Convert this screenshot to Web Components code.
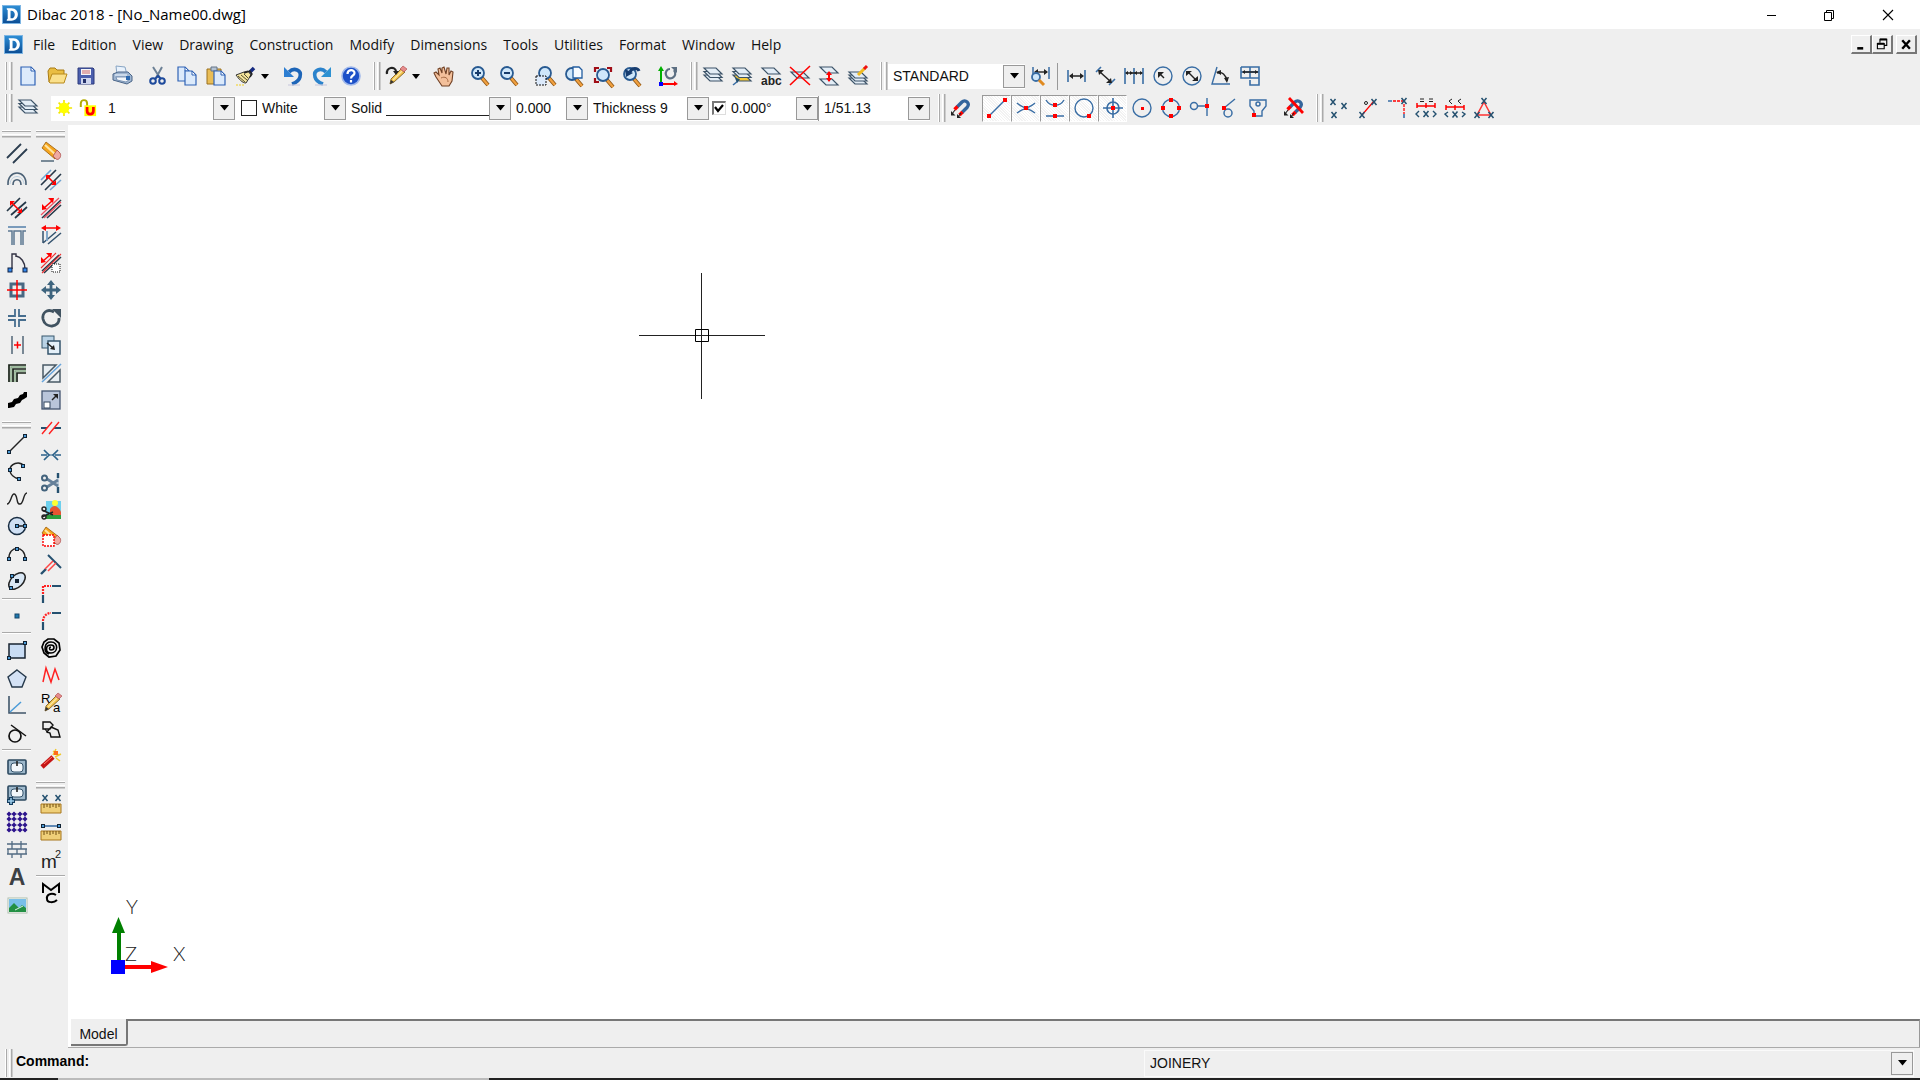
<!DOCTYPE html>
<html lang="en">
<head>
<meta charset="utf-8">
<title>Dibac 2018 - [No_Name00.dwg]</title>
<style>
    html, body { height: 100%; margin: 0; }
    body { background: #efefef; overflow: hidden; }
</style>
</head>
<body>
<dibac-app></dibac-app>

<script>
// --- Icons (20 x 20 grid) ---

const S = '#3a6ea5';   // steel blue
const N = '#24506f';   // dark blue
const K = '#222';

const line = (d, color = K, width = 1.4, extra = '') =>
    `<path d="${d}" fill="none" stroke="${color}" stroke-width="${width}" ${extra}/>`;
const fill = (d, color, stroke = 'none', width = 1) =>
    `<path d="${d}" fill="${color}" stroke="${stroke}" stroke-width="${width}"/>`;
const dot = (x, y, color = '#f00') => `<rect x="${x - 2}" y="${y - 2}" width="4" height="4" fill="${color}"/>`;
const node = (x, y) => `<rect x="${x - 1.5}" y="${y - 1.5}" width="3" height="3" fill="#4a9bd8" stroke="#123" stroke-width="1"/>`;
const ex = (x, y, color = N) => line(`M${x - 2.5} ${y - 3}l5 6m0-6l-5 6`, color, 1.5);
const circle = (x, y, r, color = S, width = 1.5, inner = 'none') =>
    `<circle cx="${x}" cy="${y}" r="${r}" fill="${inner}" stroke="${color}" stroke-width="${width}"/>`;

const sheet = (y, color = '#e3edf6') => fill(`M1 ${y}h12l6 6H7z`, color, '#3c5368', 1.2);
const stack = sheet(9) + sheet(5.5) + sheet(2);
const lens = (x = 8, y = 7) =>
    line(`M${x + 4} ${y + 5}l6 7`, '#8a5212', 4) + line(`M${x + 4} ${y + 5}l6 7`, '#f0a040', 2.4) + circle(x, y, 6, '#285a91', 1.8, '#cfe7fa');
const pageAt = (x, y) =>
    fill(`M${x} ${y}h7l4 4v10h-11z`, '#dceafb', '#2f62b5', 1.2) + fill(`M${x + 7} ${y}v4h4z`, '#fff', '#2f62b5', 1);
const magnet = line('M6 9l5-5C14 1 20 5 16 9.500l-5 5', '#34659c', 3.4) +
    line('M3.500 11.500L6.500 8.500M8.500 17l3-3', '#f00', 3.4);
const magnetTips = line('M4 12l-3 4M10 15l-3 4', K, 1.1) + fill('M0 13v4.500h4.500zM6 16v4h4z', K);
const pencil = fill('M4 18l1-5L15 3l4 3L8 16z', '#f3c34c', '#705018', .8) + line('M7 14L16 5', '#fbe7a5', 1.2) +
    fill('M14 3l3-3 4 3-3 3z', '#e58c8c', '#a44', .6) + fill('M4 18l1-4 3 2z', '#333');
const eraser = fill('M1 5l4-6L18 9l-4 7z', '#f5a51e', '#9a5d0a', .8) + line('M4 2l11 10', '#ffe5a3', 2.2) +
    fill('M12 13l4-6 3 3c2 3-1 8-4 6z', '#efaaa2', '#ad4e4e', .8);
const ruler = fill('M0 10h20v9H0z', '#efcf78', '#a8771d', 1) + line('M3 10v4m3-4v3m3-3v4m3-4v3m3-3v4m3-4v3', '#6e4d10', 1);
const scissorsDark = line('M1 10l11 5M1 17l11-5', K, 1.5) + circle(3, 9, 2, K, 1.4) + circle(3, 17, 2, K, 1.4);

const icons = {
    logo: '<defs><linearGradient id="g" x2="0" y2="1"><stop stop-color="#2f8fd6"/><stop offset="1" stop-color="#0b4d94"/></linearGradient></defs><rect x=".5" y=".5" width="19" height="19" fill="url(#g)" stroke="#7db6e4"/>' +
        '<path d="M5 3.500h5c9 0 9 13 0 13H5v-1l1-1v-9l-1-1zM9 6v8c6 1 6-9 0-8z" fill="#fff" fill-rule="evenodd"/>',
    new: fill('M3 1h10l4 4v14H3z', '#dceafb', '#2f62b5', 1.2) + fill('M13 1v4h4z', '#fff', '#2f62b5', 1),
    open: fill('M1 5l2-3h5l2 2h7v12H2z', '#e9bd42', '#a87a14') + fill('M2 16l3-8h15l-3 9H3z', '#fae08b', '#b98a1c'),
    save: fill('M2 2h15l1 1v15H2z', '#4b5fae', '#2c3a7c') + fill('M5 3h10v6H5z', '#f4f4f8') + line('M6 5h8M6 7h8', '#c66', 1) + fill('M5 12h10v6H5z', '#cfd6ee') + fill('M7 13h3v4H7z', '#24306a'),
    print: fill('M4 0l9 1 2 8H5z', '#e9f2fc', '#88a5c4') + fill('M1 8l5-2h10l4 4v5l-5 3-14-4z', '#9fb5d0', '#4a6588') + fill('M4 11h10l4 2-4 3-9-2z', '#f2f6fb', '#6784a8', .8) + line('M3 9h12', '#dfe9f5', 1.4) + dot(16, 12, '#2d69b0'),
    cut: line('M5 1l7 11M14 1L8 12', '#6d8196', 2) + circle(5, 15, 2.8, '#1e4a9c', 2) + circle(14, 15, 2.8, '#1e4a9c', 2) + line('M7 13l3-3 3 3', '#1e4a9c', 2),
    copy: pageAt(1, 1) + pageAt(8, 5),
    paste: fill('M1 3h14v15H1z', '#e9bd56', '#9a711f') + fill('M5 1h6v4H5z', '#b5c3d3', '#647488') + pageAt(8, 5),
    brush: line('M14 7l5-5', '#162b80', 3.6) + fill('M1 9l8-3 4-1 3 4-5 8c-4 0-7-4-10-8z', '#f4e49b', '#333') + line('M3 10l7 6M6 9l6 5M9 8l4 4', '#554f31', 1) + line('M9 7l6-2 2 3-2 3', '#222', 1.4) + line('M1 19h9', '#f3cf1d', 1.2, 'stroke-dasharray="2 1"'),
    undo: line('M6 6c5-5 13-2 11 5-1 4-5 6-8 7', '#1d65b8', 3.6) + fill('M1 1v10h10z', '#2d7ed2') + line('M5 19h12', '#ccd', 1.2),
    redo: line('M14 6C9 1 1 4 3 11c1 4 5 6 8 7', '#2b83cc', 3.6) + fill('M19 1v10H9z', '#2d91d2') + line('M3 19h12', '#ccd', 1.2),
    help: circle(10, 10, 9, '#9eb7ea', 1.6, '#1c50c8') + line('M6.500 8c0-5 7-5 7-1 0 3-3.500 2-3.500 5.500M10 14v2.500', '#fff', 2.2),
    annotate: pencil + line('M1 8c-1-7 8-8 9-3', K, 2.2) + fill('M7 5h6l-3 4z', K),
    hand: fill('M2 11l-2-4 2-1 3 3-1-6 2-1 2 5V2l2-1 2 7 1-6 2 0 0 7 2-4 2 1-1 9-3 5H8z', '#f3c09b', '#704024', 1.1) + line('M7 12c4-2 7 0 7 4', '#a56a44', 1),
    'zoom-in': lens() + line('M8 4v6M5 7h6', '#183c6b', 2),
    'zoom-out': lens() + line('M5 7h6', '#183c6b', 2),
    'zoom-window': lens(10, 7) + '<rect x="1" y="10" width="10" height="9" fill="#dceafb" stroke="#111" stroke-dasharray="2 1"/>',
    'zoom-page': lens(8, 8) + fill('M9 1h6l3 3v8H9z', '#f7fbff', '#235da0', 1.3),
    'zoom-extents': lens(10, 9) + line('M2 6V2h4M14 2h4v4M2 12v4h4', '#a00d16', 2.2),
    'zoom-previous': lens(8, 8) + line('M8 6c2-5 8-4 9-1', '#173d70', 3) + fill('M3 3l1 8 7-4z', '#173d70'),
    axes: line('M3 3v15', '#00b000', 2) + fill('M0 5l3-5 3 5z', '#00b000') + line('M3 18h14', '#f00', 2) + fill('M16 15l4 3-4 2z', '#f00') + dot(3, 18, '#00f') + line('M16 4c5 7-6 12-8 5-1-3 1-6 4-6', '#5c6f82', 2.2) + fill('M13 1h6v6z', '#5c6f82'),
    layers: stack,
    'layer-current': sheet(9, '#f6c936') + sheet(5.5) + sheet(2) + line('M1 19l5-4', S, 1.6) + fill('M3 12l5 1-3 4z', N),
    'layer-name': sheet(2) + '<text x="0" y="19" font-family="Liberation Sans, sans-serif" font-size="12" font-weight="700" fill="#222">abc</text>',
    'layer-off': sheet(6) + line('M0 1l20 18M20 0L0 19', '#f00', 1.6),
    'layer-merge': sheet(1) + sheet(13) + line('M10 6v9', '#f00', 2) + fill('M7 9l3-4 3 4zM7 12l3 4 3-4z', '#f00'),
    'layer-edit': sheet(12) + sheet(9) + sheet(6) + line('M10 9l7-7', '#f1bb20', 3) + line('M16 3l3-3', '#e11', 3),
    'dim-style': line('M3 1v11M19 1v12', S, 1.5) + line('M5 6h12', K, 1.4) + fill('M4 6l4-3v6zM18 6l-4-3v6z', K) + circle(6, 11, 4, S, 1.8, '#cfe7fa') + line('M9 14l5 5', '#e08a20', 3),
    'dim-linear': line('M2 4v12M19 4v12', S, 1.6) + line('M4 10h12', K, 1.5) + fill('M3 10l4-3v6zM18 10l-4-3v6z', K),
    'dim-aligned': line('M1 6l5-5M14 19l6-6', S, 1.6) + line('M5 6l10 9', K, 1.5) + fill('M3 4h6l-5 5zM17 17h-6l5-5z', K),
    'dim-chain': line('M1 2v16M10 2v16M19 2v16', S, 1.6) + line('M2 7h16', K, 1.5) + fill('M1 7l3-2v4zM9 7L6 5v4zM10 7l3-2v4zM19 7l-3-2v4z', K),
    'dim-radius': circle(10, 10, 9, S, 1.4) + line('M11 12L7 8', K, 1.5) + fill('M5 6h6l-6 6z', K),
    'dim-diameter': circle(10, 10, 9, S, 1.4) + line('M6 6l8 8', K, 1.5) + fill('M4 5h6l-6 5zM16 15h-6l6-5z', K),
    'dim-angle': line('M6 1L1 18h18', S, 1.4) + line('M6 7c5-2 9 2 10 8', K, 1.5) + fill('M5 6l5-2v5zM13 12l5-1-2 6z', K),
    'dim-area': line('M1 1h18v18h-9v-5M1 1v11h9V1M1 6h18M10 12h9', S, 1.6) + line('M3 6h15', K, 1.5) + fill('M2 6l3-2v4zM18 6l-3-2v4z', K),

    magnet: magnet + magnetTips,
    'magnet-off': magnet + line('M5 0l14 15', '#f00', 2.8) + magnetTips,
    'snap-end': line('M2 18L18 2', S) + dot(2, 18) + dot(18, 2),
    'snap-cross': line('M1 5c5 5 12 5 18 10M1 15c6-5 13-5 18-10', S) + dot(10, 10),
    'snap-near': line('M1 2c4 7 14 7 18 0M1 18h18', S) + dot(10, 7) + dot(10, 18),
    'snap-circle': circle(10, 10, 9, S, 1.4) + dot(15, 18),
    'snap-target': circle(10, 10, 6, S, 1.7) + line('M10 0v20M0 10h20', S, 1.6) + dot(10, 10),
    'snap-center': circle(10, 10, 9, S, 1.4) + '<rect x="9" y="9" width="3" height="3" fill="red"/>',
    'snap-quad': circle(10, 10, 8.5, S, 1.4) + dot(10, 2) + dot(2, 10) + dot(18, 10) + dot(10, 18),
    'snap-perp': circle(4, 8, 3.5, S) + line('M8 8h9M17 0v18', S) + dot(17, 8),
    'snap-tangent': circle(9, 15, 4, S) + line('M5 10L16 1', S) + dot(5, 10),
    'snap-insert': line('M2 2h16v6l-4 5v5H6v-5L2 8z', S) + circle(10, 6, 2, S) + dot(6, 17),

    'x-points': ex(4, 4) + ex(15, 8) + ex(5, 17),
    'x-line': line('M4 17L16 3', '#f00', 1.2) + circle(8, 5, 1.5, K, 1) + ex(16, 4) + ex(4, 17),
    'x-corner': line('M1 3h4M17 16v4', S, 1.6) + line('M6 3h10M17 6v10', '#f00', 1.3, 'stroke-dasharray="3 1"') + ex(17, 3),
    'x-equal': line('M4 1h4M13 1h4M4 3.500h4M13 3.500h4', K, 1) + line('M1 8h18M1 5v5M10 5v5M19 5v5', '#f00', 1.5) + line('M3 13L0 16l3 3M17 13l3 3-3 3', N) + ex(10, 16),
    'x-less': line('M7 1L4 3l3 3M16 1l-3 2 3 3', K, 1) + line('M1 9h18M1 7v5M10 7v5M19 7v5', '#f00', 1.5) + line('M3 14l-3 2 3 3M17 14l3 2-3 3', N) + ex(10, 16.5),
    'x-triangle': line('M10 4L3 17h14z', '#f33', 1.5) + ex(10, 3) + ex(3, 17) + ex(17, 17),

    wall: line('M0 15L14 1M6 20L20 6', '#2c3e50', 1.8),
    arc2: line('M1 15C0-1 20-1 19 15M6 15c0-7 8-7 8 0', '#4a6075', 1.6) + line('M3 14c1-10 13-10 14 0', '#bcd0e0', 1),
    offset: line('M0 13L13 0M4 17L19 4M8 20L20 9', '#263848', 1.7) + line('M5 5l8 8', '#f00', 1.6) + fill('M3 3h5l-5 5zM15 15h-5l5-5z', '#f00'),
    column: line('M1 2h18', '#7a9bbb', 2) + line('M1 6h4v14M7 20V6h7v14M16 20V6h3', '#5d7892', 1.5),
    door: line('M5 16V1h4v3M9 3c5 1 9 6 9 13', '#334', 1.4) + '<rect x="1" y="15" width="4" height="4" fill="#38e" stroke="#124"/><rect x="16" y="15" width="4" height="4" fill="#38e" stroke="#124"/>',
    window: '<rect x="4" y="4" width="12" height="12" fill="none" stroke="#496983" stroke-width="3"/>' + line('M10 0v20M0 10h20', '#f00', 1.5),
    crossing: line('M1 8h7V1M12 1v7h7M1 12h7v7M12 19v-7h7', '#466d8e', 1.8),
    break: line('M5 1v18M16 1v18', '#516577', 1.5) + line('M7 10h7M10.500 6.500v7', '#f00', 1.5),
    corner: line('M2 19V2h17M6 19V6h13M10 19V10h9', '#172117', 1.7) + line('M4 19V4h15M8 19V8h11', '#84a984', 1.4),
    stairs: fill('M1 13l4-1 2-3 4-1 2-3 3-1 1-2h3v5l-3 2-2 1-2 3-4 1-2 3-5 1H1z', '#000'),
    line: line('M2 18L18 2', K, 1.5) + node(2, 18) + node(18, 2),
    'arc-open': line('M17 5C12-1 3 3 3 9c0 5 5 8 9 9', K, 1.5) + node(16, 5) + node(3, 9) + node(12, 18),
    spline: line('M0 15c4 0 4-10 7-10 4 0 2 11 6 10 4 0 3-11 7-11', K, 1.4),
    circle: circle(10, 10, 8.5, '#172b40', 1.5, '#cfe0f4') + line('M10 10h8', K, 1.5) + node(10, 10) + node(18, 10),
    arc: line('M2 15C1 1 19 1 18 15', K, 1.5) + node(2, 15) + node(18, 15) + node(10, 5),
    ellipse: '<ellipse cx="10" cy="10" rx="10" ry="6" transform="rotate(-45 10 10)" fill="#d9e7f5" stroke="#222" stroke-width="1.500"/>' + dot(10, 10, '#123') + node(4, 17) + node(5, 5),
    point: '<rect x="8" y="8" width="4" height="4" fill="#1e78ae" stroke="#17476b"/>',
    rect: '<rect x="2" y="4" width="16" height="14" fill="#c8dcf4" stroke="#172330" stroke-width="1.500"/>' + node(2, 18) + node(18, 3),
    polygon: fill('M10 2l9 7-4 10H5L1 9z', '#d4e2f5', '#26394b', 1.4),
    angle: line('M2 1v17h17', '#40566a', 1.6) + line('M3 17L14 7', '#4a9bd8', 1.5),
    tangent: circle(8, 13, 6, '#111', 1.7) + line('M4 2l15 11', '#111', 1.5),
    sink: '<rect x="1" y="3" width="18" height="14" rx="1" fill="#9eb8cb" stroke="#2b485f" stroke-width="1.600"/><rect x="4" y="6" width="12" height="9" rx="3" fill="#f2f7fb" stroke="#36546c"/>' + line('M10 4v5', K, 1.6),
    'sink-add': '<rect x="1" y="1" width="18" height="14" rx="1" fill="#9eb8cb" stroke="#2b485f" stroke-width="1.600"/><rect x="4" y="4" width="12" height="8" rx="3" fill="#f2f7fb" stroke="#36546c"/>' + line('M10 2v5', K, 1.6) + line('M0 16h8M4 12v8', '#153d5e', 4) + line('M1 16h6M4 13v6', '#9fd0ee', 1.5),
    grid: line('M2 0v20M7 0v20M13 0v20M18 0v20M0 2h20M0 7h20M0 13h20M0 18h20', '#7a6bb8', .8) + [2, 7, 13, 18].map(x => [2, 7, 13, 18].map(y => fill(`M${x} ${y - 2.5}l2.500 2.500-2.500 2.500-2.500-2.500z`, '#2d148c')).join('')).join(''),
    bricks: line('M0 4h20M0 9h20M0 14h20M5 4v5M14 4v5M1 9v5M10 9v5M19 9v5M5 14v4M14 14v4M5 1v3M14 1v3', '#526b83', 1.3),
    text: '<text x="10" y="18" text-anchor="middle" font-family="Liberation Sans, sans-serif" font-size="23" font-weight="700" fill="#3c4044">A</text>',
    image: '<rect x="1" y="3" width="19" height="15" fill="#fff" stroke="#aebfae"/><rect x="2" y="4" width="17" height="13" fill="#79bfe9"/>' + fill('M2 13l5-5 5 5 3-3 4 3v4H2z', '#239044') + line('M8 15l8-4', '#d8f2e1', 1),

    erase: eraser + line('M0 18h13', '#52687a', 1.5),
    'mod-move': line('M0 10L10 0M9 20L20 10', '#71a4d0', 1.6) + line('M0 15L15 0M4 20L20 4', '#263848', 1.6) + line('M7 7l6 6', '#f00', 1.6) + fill('M5 5h5l-5 5zM15 15h-5l5-5z', '#f00'),
    'mod-extend': line('M1 20L20 2M6 20L20 7', '#263848', 1.6) + line('M0 17L18 0M3 20L20 4', '#ef4f60', 1.2) + line('M3 10l8-7', '#f00', 1.6) + fill('M1 12V6l5 5zM13 0H7l5 5z', '#f00'),
    'mod-shift': line('M2 6v12M6 6v10M2 18L15 7M7 19L20 8', '#34526e', 1.5) + line('M6 6v10', '#8fb9df', 1.5) + line('M2 3h16', '#f00', 1.5) + fill('M0 3l5-3v6zM20 3l-5-3v6z', '#f00'),
    'mod-copy': line('M1 18L18 2M3 20L20 4', '#263848', 1.5) + line('M0 15L15 0M1 20L20 1', '#e33', 1.1) + '<rect x="11" y="11" width="8" height="8" fill="#fff" stroke="#111" stroke-dasharray="1 1"/>' + line('M2 8l7-6', '#f00', 1.5) + fill('M0 10V4l5 5zM11 0H5l5 5z', '#f00'),
    move: line('M10 3v14M3 10h14', '#3e647e', 2.8) + fill('M6 5l4-5 4 5zM6 15l4 5 4-5zM5 6l-5 4 5 4zM15 6l5 4-5 4z', '#3e647e'),
    rotate: line('M13 4C6 0 1 5 2 11c2 10 17 9 16-1', '#405260', 2.8) + fill('M11 1h9v9z', '#405260'),
    duplicate: '<rect x="1" y="1" width="12" height="12" fill="#b9d2e5" stroke="#36566d"/><rect x="7" y="6" width="12" height="13" fill="#e4f0f9" stroke="#36566d" stroke-width="1.500"/>' + line('M6 8l6 5', K, 1.5) + fill('M14 15l-5-1 4-4z', K),
    mirror: fill('M2 2h13L2 15zM19 7v12H7z', '#e8eef2', '#485966', 1.5) + line('M1 19L20 1', '#68a5dc', 1.6),
    scale: '<rect x="1" y="1" width="18" height="18" fill="#b9c5da" stroke="#42546f" stroke-width="1.300"/><rect x="3" y="12" width="6" height="6" fill="#fff" stroke="#33465d"/>' + line('M11 10l4-4', K, 1.5) + fill('M12 4h5v5z', K),
    'cut-line': line('M0 10h6M13 10h7', N, 2) + line('M1 16L11 4M8 16L18 4', '#f22', 1.4),
    join: line('M0 10h6M14 10h6M3 5l5 5-5 5M17 5l-5 5 5 5', '#2c628a', 1.7) + line('M8 10h4', '#2c628a', 1),
    trim: line('M17 0v5M17 14v6', N, 2.4) + line('M17 5v9', '#8fb0cc', 1) + line('M6 6l11 7M6 14l11-7', '#65809a', 2.8) + circle(3.500, 5, 2.5, '#42627c', 2) + circle(3.500, 15, 2.5, '#42627c', 2),
    'trim-image': '<path d="M5 1h15v17H5z" fill="#6ed0ed"/><circle cx="14" cy="3" r="3" fill="#ff3"/>' + fill('M9 9c4-6 9-2 11 3v6H9z', '#e75532') + fill('M5 15h15v4H5z', '#2d9d3c') + scissorsDark,
    'erase-box': eraser + '<rect x="2" y="7" width="11" height="11" fill="#fff" stroke="red" stroke-dasharray="2 1" stroke-width="1.400"/>',
    extend: line('M7 0l13 13', N, 2) + line('M0 19l5-5', N, 2.4) + line('M4 14l8-8M7 16l8-8', '#f44', 1.5),
    chamfer: line('M11 3h9M2 12v8', N, 2.2) + line('M2 11V3h8', '#f22', 2.2, 'stroke-dasharray="2 1"'),
    fillet: line('M11 3h9M2 12v8', N, 2.2) + line('M2 11c0-4 3-8 8-8', '#f22', 2.2, 'stroke-dasharray="2 1"'),
    rings: fill('M7 1h6l5 4 1 7-4 6-7 1-5-4-2-6 2-5z', 'none', '#000', 1.7) + line('M8 16c-6-2-5-12 2-12 8 0 7 11 0 11-6 0-6-8 0-8 4 0 4 5 0 5-2 0-2-3 0-3', '#000', 1.6),
    zigzag: line('M2 17L5 3l5 14 4-13 4 11', '#f22', 1.5),
    'edit-text': pencil + '<text x="0" y="10" font-family="Liberation Sans, sans-serif" font-size="13" fill="#000">R</text><text x="12" y="19" font-family="Liberation Sans, sans-serif" font-size="13" fill="#000">a</text>',
    'to-polygon': line('M2 2h7l3 3-3 4H2zM10 7l7 3 2 7h-9l-1-4-3-1z', '#111', 1.4) + line('M4 9l3 4', '#111', 1.2),
    torch: line('M1 19L12 9', '#c51515', 4.6) + line('M3 16l8-7', '#ff7c6c', 1) + line('M12 7l3-6M14 9l6-3M12 3l6 4M15 10l4 3', '#f0c82d', 1.5) + dot(15, 5, '#ff6b1a'),
    'measure-points': ruler + ex(4, 4) + ex(17, 4),
    'measure-line': ruler + line('M3 5h15', S, 1.6) + node(2, 5) + node(18, 5),
    'square-metre': '<text x="0" y="19" font-family="Liberation Sans, sans-serif" font-size="19" fill="#222">m</text><text x="14" y="9" font-family="Liberation Sans, sans-serif" font-size="11" fill="#222">2</text>',
    mc: line('M2 10V1l8 6 8-6v9M15 12c-5-3-10 0-9 4 0 4 7 4 10 1', '#000', 2),

    minimize: line('M5 10.500h9', '#000', 1),
    restore: line('M4.500 7.500h7v8h-7zM6.500 7.500v-2h7v8h-2', '#000', 1),
    close: line('M5 5l10 10M15 5L5 15', '#000', 1.1),
    'mdi-min': fill('M5 13h7v3H5z', '#000'),
    'mdi-restore': line('M4 9h8v6H4zM7 8V4h8v7h-3', '#000', 1.3) + line('M4 9h8M7 4h8', '#000', 2.4),
    'mdi-close': line('M5 5l9 10M14 5L5 15', '#000', 2.8),
    sun: line('M10 1v18M1 10h18M4 4l12 12M16 4L4 16', '#f2e600', 1.8) + circle(10, 10, 5, '#ff0', 2, '#ff0'),
    unlock: line('M2 9V5c0-5 7-5 7 0v4', '#b3ab00', 2.2) + fill('M6 7h13v12H6z', '#ff0') + line('M9 9v4c0 5 7 5 7 0V9', '#f00', 3)
};

const svg = (name, size = 20) =>
    `<svg width="${size}" height="${size}" viewBox="0 0 20 20" aria-hidden="true">${icons[name]}</svg>`;

// --- Toolbar contents: '|' separator, '-' gap, 'v' small menu arrow, '*' pressed ---

const toolLists = {
    file: ['new', 'open', 'save', '-', 'print', '-', 'cut', 'copy', 'paste', 'brush', 'v', '-', 'undo', 'redo', 'help'],
    view: ['annotate', 'v', '-', 'hand', '-', 'zoom-in', 'zoom-out', '-', 'zoom-window', 'zoom-page', 'zoom-extents', 'zoom-previous', '-', 'axes'],
    layer: ['layers', 'layer-current', 'layer-name', 'layer-off', 'layer-merge', 'layer-edit'],
    dimension: ['dim-style', '|', 'dim-linear', 'dim-aligned', 'dim-chain', 'dim-radius', 'dim-diameter', 'dim-angle', 'dim-area'],
    snap: ['magnet', '-', 'snap-end*', 'snap-cross*', 'snap-near*', 'snap-circle*', 'snap-target*', 'snap-center', 'snap-quad', 'snap-perp', 'snap-tangent', 'snap-insert', '-', 'magnet-off'],
    points: ['x-points', 'x-line', 'x-corner', 'x-equal', 'x-less', 'x-triangle'],
    wall: ['wall', 'arc2', 'offset', 'column', 'door', 'window', 'crossing', 'break', 'corner', 'stairs'],
    draw: ['line', 'arc-open', 'spline', 'circle', 'arc', 'ellipse', '|', 'point', '|', 'rect', 'polygon', 'angle', 'tangent', '|', 'sink', 'sink-add', 'grid', 'bricks', 'text', 'image'],
    modify: ['erase', 'mod-move', 'mod-extend', 'mod-shift', 'mod-copy', 'move', 'rotate', 'duplicate', 'mirror', 'scale', 'cut-line', 'join', 'trim', 'trim-image', 'erase-box', 'extend', 'chamfer', 'fillet', 'rings', 'zigzag', 'edit-text', 'to-polygon', 'torch'],
    measure: ['measure-points', 'measure-line', 'square-metre', '|', 'mc']
};
const menus = ['File', 'Edition', 'View', 'Drawing', 'Construction', 'Modify', 'Dimensions', 'Tools', 'Utilities', 'Format', 'Window', 'Help'];

const renderTools = (tools) => tools.map(tool => {
    if (tool === '-') return '<i class="gap"></i>';
    if (tool === '|') return '<i class="sep"></i>';
    if (tool === 'v') return '<button class="more" aria-label="More"><svg width="8" height="5"><path d="M0 0h8L4 5z"/></svg></button>';
    const name = tool.replace('*', '');
    return `<tool-button icon="${name}"${tool.endsWith('*') ? ' pressed' : ''}></tool-button>`;
}).join('');

// --- Elements ---

class ToolButton extends HTMLElement {
    connectedCallback() {
        const name = this.getAttribute('icon');
        this.attachShadow({ mode: 'open' }).innerHTML = `
            <style>
                :host { display: block; width: 29px; height: 27px; flex: none; }
                button { display: grid; place-items: center; box-sizing: border-box; width: 100%; height: 100%; margin: 0; padding: 0; border: 0; background: none; }
                svg { display: block; overflow: visible; }
                :host([pressed]) button {
                    border-left: 1px solid #999; border-top: 1px solid #999;
                    border-right: 1px solid #fff; border-bottom: 1px solid #fff;
                    background: repeating-linear-gradient(45deg, #fff 0 1px, #f2f2f2 1px 2px);
                }
            </style>
            <button aria-label="${name}" ${this.hasAttribute('pressed') ? 'aria-pressed="true"' : ''}>${svg(name)}</button>
        `;
    }
}
customElements.define('tool-button', ToolButton);

class ToolBar extends HTMLElement {
    connectedCallback() {
        const tools = toolLists[this.getAttribute('tools')] || [];
        this.attachShadow({ mode: 'open' }).innerHTML = `
            <style>
                :host { display: flex; align-items: center; flex: none; }
                .grip { flex: none; box-sizing: border-box; width: 6px; height: 28px; margin-right: 1px; border: solid #aaa; border-width: 0 1px; box-shadow: -1px 0 #fff, inset 2px 0 #efefef, inset 3px 0 #fff, 1px 0 #ccc; }
                :host([plain]) .grip { display: none; }
                .gap { width: 7px; }
                .sep { width: 1px; height: 27px; margin: 0 3px; background: #999; }
                .more { display: grid; place-items: center; width: 12px; height: 27px; padding: 0; border: 0; background: none; }
                :host([vertical]) { flex-direction: column; width: 29px; }
                :host([vertical]) .grip { width: 29px; height: 6px; margin: 0 0 2px; border-width: 1px 0; box-shadow: 0 -1px #fff, inset 0 2px #efefef, inset 0 3px #fff, 0 1px #ccc; }
                :host([vertical]) .sep { width: 29px; height: 2px; margin: 3px 0 2px; background: linear-gradient(#aaa 50%, #fff 50%); }
                :host([vertical]) tool-button:nth-of-type(even) { margin-bottom: 1px; }
            </style>
            <span class="grip"></span>${renderTools(tools)}<slot></slot>
        `;
    }
}
customElements.define('tool-bar', ToolBar);

class ComboBox extends HTMLElement {
    connectedCallback() {
        const label = this.getAttribute('label');
        this.attachShadow({ mode: 'open' }).innerHTML = `
            <style>
                :host { display: flex; align-items: center; box-sizing: border-box; height: 25px; background: #fff; font: 14px/20px "Liberation Sans", Arial, sans-serif; color: #111; }
                select { flex: 1; min-width: 0; height: 22px; margin: 0; padding: 0 0 0 5px; border: 0; appearance: none; background: none; font: inherit; color: inherit; outline: 0; }
                :host([compact]) select { flex: none; }
                button { display: grid; place-items: center; flex: none; box-sizing: border-box; width: 22px; height: 23px; padding: 0; border: 1px solid #999; background: #efefef; }
            </style>
            <slot name="before"></slot>
            <select aria-label="${label}"><option>${this.getAttribute('value')}</option></select>
            <slot name="after"></slot>
            <button aria-label="Open ${label}"><svg width="9" height="6"><path d="M0 0h9L4.500 5.500z"/></svg></button>
        `;
        const select = this.shadowRoot.querySelector('select');
        this.shadowRoot.querySelector('button').addEventListener('click', () => select.showPicker());
    }
}
customElements.define('combo-box', ComboBox);

class TitleBar extends HTMLElement {
    connectedCallback() {
        this.attachShadow({ mode: 'open' }).innerHTML = `
            <style>
                :host { display: flex; align-items: center; height: 29px; padding: 0 3px 0 2px; background: #fff; font: 15px/20px "Open Sans", sans-serif; color: #000; }
                span { flex: 1; padding: 0 0 2px 6px; }
                button { display: grid; place-items: center; width: 58px; height: 29px; padding: 0; border: 0; background: none; }
            </style>
            ${svg('logo', 19)}<span>Dibac 2018 - [No_Name00.dwg]</span>
            <button aria-label="Minimize">${svg('minimize')}</button>
            <button aria-label="Restore">${svg('restore')}</button>
            <button aria-label="Close">${svg('close')}</button>
        `;
    }
}
customElements.define('title-bar', TitleBar);

class MenuBar extends HTMLElement {
    connectedCallback() {
        this.attachShadow({ mode: 'open' }).innerHTML = `
            <style>
                :host { display: flex; align-items: center; height: 31px; padding: 0 3px 0 4px; font: 14px/20px "Open Sans", sans-serif; color: #111; }
                nav { display: flex; flex: 1; gap: 16px; padding-left: 10px; }
                nav button { padding: 0; border: 0; background: none; font: inherit; color: inherit; }
                .mdi { display: grid; place-items: center; box-sizing: border-box; width: 21px; height: 19px; padding: 0; border: solid; border-width: 1px 2px 2px 1px; border-color: #fff #777 #777 #fff; background: #efefef; }
                .mdi:last-child { margin-left: 3px; }
            </style>
            ${svg('logo', 19)}
            <nav>${menus.map(menu => `<button>${menu}</button>`).join('')}</nav>
            <button class="mdi" aria-label="Minimize drawing">${svg('mdi-min', 17)}</button>
            <button class="mdi" aria-label="Restore drawing">${svg('mdi-restore', 17)}</button>
            <button class="mdi" aria-label="Close drawing">${svg('mdi-close', 17)}</button>
        `;
    }
}
customElements.define('menu-bar', MenuBar);

class DrawingArea extends HTMLElement {
    connectedCallback() {
        this.attachShadow({ mode: 'open' }).innerHTML = `
            <style>
                :host { display: block; position: relative; background: #fff; overflow: hidden; }
                svg { position: absolute; }
                .cursor { left: 570px; top: 147px; }
                .ucs { left: 36px; bottom: 32px; }
                text { font: 300 20px Lato, sans-serif; fill: #222; }
            </style>
            <svg class="cursor" width="128" height="128" fill="none" stroke="#222">
                <path d="M63.500 1v126M1 63.500h126"/>
                <path d="M57.500 57.500h13v12h-13z" stroke="#000"/>
            </svg>
            <svg class="ucs" width="90" height="100" viewBox="0 -10 90 100">
                <path d="M13 70V36H8L14.500 20 21 36h-4v34z" fill="#008000"/>
                <path d="M20 68h27v-4l17 6-17 6v-4H20z" fill="#f00"/>
                <path d="M7 63h14v14H7z" fill="#00f"/>
                <text x="22" y="17">Y</text><text x="21" y="64">Z</text><text x="69" y="64">X</text>
            </svg>
        `;
    }
}
customElements.define('drawing-area', DrawingArea);

class SheetTabs extends HTMLElement {
    connectedCallback() {
        this.attachShadow({ mode: 'open' }).innerHTML = `
            <style>
                :host { display: flex; height: 28px; padding-left: 3px; border-bottom: 1px solid #aaa; background: linear-gradient(90deg, #fff 3px, #efefef 3px); font: 14px/20px "Liberation Sans", Arial, sans-serif; color: #111; }
                button { width: 57px; height: 27px; padding: 5px 0 0; border: solid #777; border-width: 0 2px 2px 0; border-radius: 0 0 3px 0; background: #efefef; font: inherit; color: inherit; }
                .rest { flex: 1; border-top: 2px solid #777; border-right: 1px solid #999; }
            </style>
            <button role="tab" aria-selected="true">Model</button><div class="rest"></div>
        `;
    }
}
customElements.define('sheet-tabs', SheetTabs);

class CommandBar extends HTMLElement {
    connectedCallback() {
        this.attachShadow({ mode: 'open' }).innerHTML = `
            <style>
                :host { display: flex; align-items: center; height: 30px; padding: 0 7px 0 6px; font: 14px/20px "Liberation Sans", Arial, sans-serif; color: #111; border-bottom: 2px solid #222; border-image: linear-gradient(90deg, #222 60px, #bbb 60px 490px, #222 490px) 2; }
                label { padding: 0 6px 4px 3px; font-weight: 700; color: #000; }
                input { flex: 1; min-width: 0; height: 24px; padding: 0; border: 0; background: none; font: inherit; outline: 0; }
                combo-box { width: 40vw; background: none; box-shadow: 0 0 0 1px #fafafa; }
            </style>
            <tool-bar></tool-bar>
            <label for="command">Command:</label><input id="command">
            <combo-box label="Group" value="JOINERY"></combo-box>
        `;
    }
}
customElements.define('command-bar', CommandBar);

class DibacApp extends HTMLElement {
    connectedCallback() {
        this.attachShadow({ mode: 'open' }).innerHTML = `
            <style>
                :host { display: flex; flex-direction: column; height: 100vh; background: #efefef; }
                .row { display: flex; align-items: center; height: 32px; padding-left: 6px; gap: 9px; }
                .props { display: flex; align-items: center; height: 25px; background: #fff; }
                main { display: flex; flex: 1; min-height: 0; padding-top: 1px; }
                aside { display: flex; gap: 5px; width: 66px; padding: 6px 0 0 2px; }
                .column { display: flex; flex-direction: column; gap: 8px; }
                .column:last-child { gap: 11px; }
                .work { display: flex; flex-direction: column; flex: 1; min-width: 0; }
                drawing-area { flex: 1; }
                .name { width: 137px; }
                .layer { width: 184px; }
                .color { width: 111px; }
                .linetype { width: 165px; }
                .weight { width: 77px; }
                .thickness { width: 121px; }
                .angle { width: 92px; }
                .scale { width: 112px; border-left: 1px solid #999; }
                .state { display: flex; gap: 6px; padding: 0 6px 0 4px; }
                .swatch { box-sizing: border-box; width: 16px; height: 16px; margin-left: 6px; border: 1px solid #222; }
                .stroke { flex: 1; height: 1px; margin: 14px 0 0 3px; background: #222; }
                .check { display: grid; margin-left: 3px; }
                .check > * { grid-area: 1 / 1; }
                .check svg { pointer-events: none; }
                input { box-sizing: border-box; width: 14px; height: 14px; margin: 0; appearance: none; border: solid; border-width: 2px 1px 1px 2px; border-color: #777 #ddd #ddd #777; background: #fff; }
                input:not(:checked) + svg { display: none; }
            </style>
            <title-bar></title-bar>
            <menu-bar></menu-bar>
            <div class="row">
                <tool-bar tools="file"></tool-bar>
                <tool-bar tools="view"></tool-bar>
                <tool-bar tools="layer"></tool-bar>
                <tool-bar>
                    <combo-box class="name" label="Dimension style" value="STANDARD"></combo-box>
                    <tool-bar plain tools="dimension"></tool-bar>
                </tool-bar>
            </div>
            <div class="row">
                <tool-bar>
                    <tool-button icon="layers"></tool-button>
                </tool-bar>
                <div class="props">
                    <combo-box class="layer" label="Layer" value="1">
                        <span slot="before" class="state">${svg('sun', 18)}${svg('unlock', 18)}</span>
                    </combo-box>
                    <combo-box class="color" label="Color" value="White"><span slot="before" class="swatch"></span></combo-box>
                    <combo-box class="linetype" compact label="Line type" value="Solid"><span slot="after" class="stroke"></span></combo-box>
                    <combo-box class="weight" label="Line width" value="0.000"></combo-box>
                    <combo-box class="thickness" label="Thickness" value="Thickness 9"></combo-box>
                    <span class="check">
                        <input type="checkbox" checked aria-label="Use angle">
                        <svg width="14" height="14" viewBox="0 0 14 14"><path d="M3 6l3 4 5-6" fill="none" stroke="#000" stroke-width="2.200"/></svg>
                    </span>
                    <combo-box class="angle" label="Angle" value="0.000°"></combo-box>
                    <combo-box class="scale" label="Scale" value="1/51.13"></combo-box>
                </div>
                <tool-bar tools="snap"></tool-bar>
                <tool-bar tools="points"></tool-bar>
            </div>
            <main>
                <aside>
                    <div class="column">
                        <tool-bar vertical tools="wall"></tool-bar>
                        <tool-bar vertical tools="draw"></tool-bar>
                    </div>
                    <div class="column">
                        <tool-bar vertical tools="modify"></tool-bar>
                        <tool-bar vertical tools="measure"></tool-bar>
                    </div>
                </aside>
                <div class="work">
                    <drawing-area></drawing-area>
                    <sheet-tabs></sheet-tabs>
                </div>
            </main>
            <command-bar></command-bar>
        `;
    }
}
customElements.define('dibac-app', DibacApp);
</script>
</body>
</html>
